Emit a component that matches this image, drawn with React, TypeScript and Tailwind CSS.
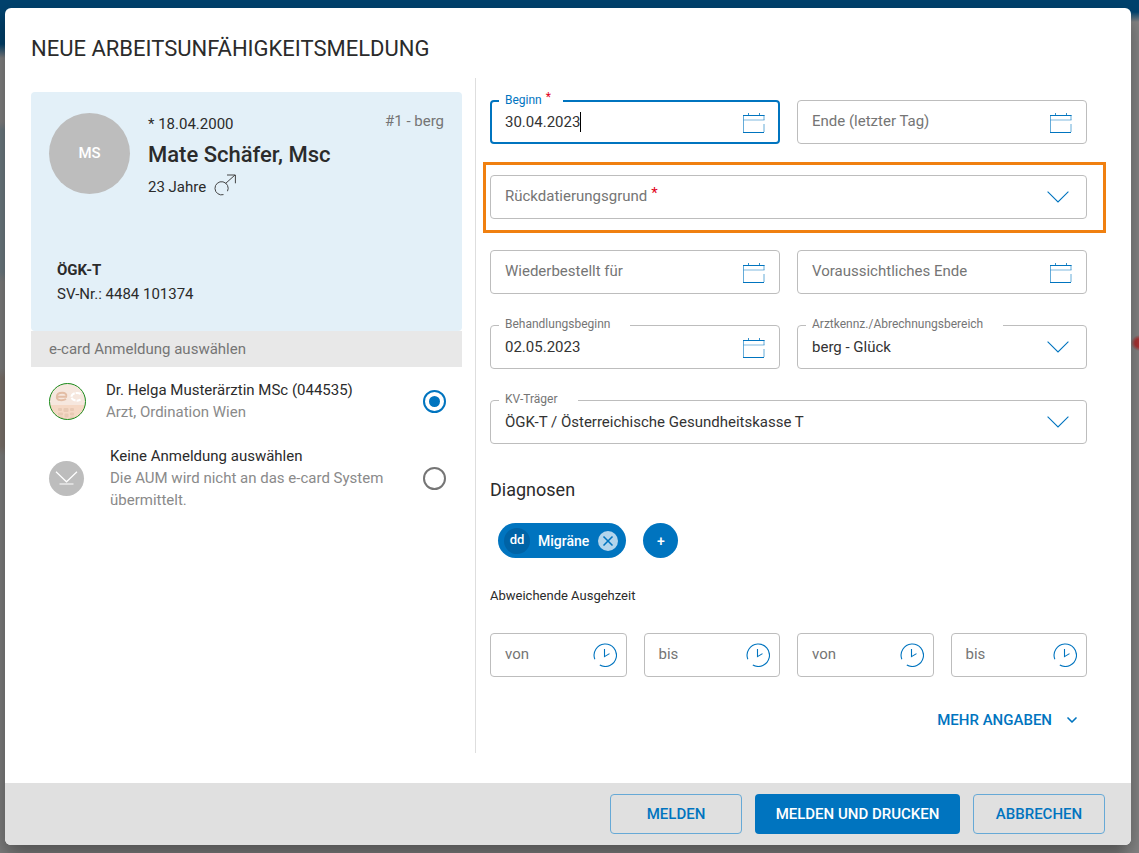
import React, { useState } from 'react';
import { ChevronDown, X } from 'lucide-react';
import clsx from 'clsx';

function CalendarIcon() {
  return (
    <svg width="22" height="21" viewBox="0 0 22 21" fill="none" stroke="#0074bf" aria-hidden="true">
      <path d="M5.5 1v3M16.5 1v3" strokeWidth="1" opacity="0.8" />
      <path d="M0 3.500h21.500" strokeWidth="1" />
      <path d="M.5 8h21" strokeWidth="1" opacity="0.5" />
      <path d="M.5 3v17M21 3v5M21 12v8" strokeWidth="1" opacity="0.6" />
      <path d="M0 20.500h21" strokeWidth="1" />
    </svg>
  );
}

function ClockIcon() {
  return (
    <svg width="24" height="24" viewBox="0 0 24 24" fill="none" stroke="#0074bf" strokeWidth="1.1" aria-hidden="true">
      <path d="M1.800 16.200A11.200 11.200 0 1 1 6.800 22" />
      <path d="M11.500 6v7.600l5-3" />
    </svg>
  );
}

function DropdownIcon() {
  return (
    <svg width="22" height="12" viewBox="0 0 22 12" fill="none" stroke="#0074bf" strokeWidth="1.1" aria-hidden="true">
      <path d="M.6.700 11 10.900 21.400.700" />
    </svg>
  );
}

function MaleIcon() {
  return (
    <svg className="mb-1" width="22" height="22" viewBox="0 0 22 22" fill="none" stroke="#444" aria-hidden="true">
      <path d="M9.500 20.600a6.600 6.600 0 1 1 4-3.400" />
      <path d="M11.500 9.500 21 1M13 1h8.400v8.300" />
    </svg>
  );
}

function EcardLogo() {
  return (
    <svg className="shrink-0" width="37" height="37" viewBox="0 0 37 37" aria-hidden="true">
      <defs>
        <clipPath id="ecard">
          <circle cx="18.5" cy="18.5" r="18" />
        </clipPath>
      </defs>
      <g clipPath="url(#ecard)">
        <rect width="37" height="22" fill="#f6e7de" />
        <rect y="22" width="37" height="15" fill="#f5d8c5" />
        <path
          d="M8.500 13.800H17.200C18 11.200 16 9.800 13.300 9.800C10 9.800 7.800 11.500 7.800 14.200C7.800 17.500 13.500 18.200 17 16"
          fill="none"
          stroke="#e3bda5"
          strokeWidth="1.900"
        />
        <path d="M31.500 11c-2-1.800-9-1.500-9 2.800s7 4.600 9 2.800" fill="none" stroke="#fff" strokeWidth="2" strokeDasharray="5 1" />
        <g fill="#e8c9b4">
          <rect x="9" y="25" width="4" height="3" rx="1" />
          <rect x="14.500" y="25" width="5" height="4" rx="1" />
          <rect x="21" y="25" width="4" height="3" rx="1" />
          <rect x="9" y="29.500" width="5" height="3" rx="1" />
          <rect x="15.500" y="30.500" width="4" height="4" rx="1" />
          <rect x="21" y="29.500" width="4" height="3" rx="1" />
          <rect x="10" y="33.500" width="4" height="2" rx="1" />
          <rect x="21" y="33.500" width="4" height="2" rx="1" />
        </g>
      </g>
      <circle cx="18.5" cy="18.5" r="18" fill="none" stroke="#1a8a1a" />
    </svg>
  );
}

function NoCardIcon() {
  return (
    <span className="flex size-[35px] shrink-0 items-center justify-center rounded-full bg-[#bdbdbd]">
      <svg width="23" height="14" viewBox="0 0 23 14" fill="none" stroke="#fff" strokeWidth="1.200" aria-hidden="true">
        <path d="M1 .8 11.500 10.800 22 .8M4.500 13h14" />
      </svg>
    </span>
  );
}

interface FieldProps {
  id: string;
  label: string;
  floating?: boolean;
  focused?: boolean;
  required?: boolean;
  icon: React.ReactNode;
  children: React.ReactNode;
}

function Field({ id, label, floating, focused, required, icon, children }: FieldProps) {
  return (
    <div
      className={clsx(
        'relative flex h-11 items-center rounded',
        focused ? 'border-2 border-[#0074bf] px-[13px]' : 'border border-[#bdbdbd] px-3.5'
      )}
    >
      {children}
      <label
        htmlFor={id}
        className={clsx(
          'pointer-events-none absolute whitespace-nowrap',
          floating ? 'bg-white pl-1.5 text-xs leading-4' : 'top-2.5 left-3.5 text-[15px] leading-5',
          floating && (focused ? '-top-[11px] left-[7px] pr-3' : '-top-2.5 left-2 pr-5'),
          focused ? 'text-[#0074bf]' : 'text-[#757575]'
        )}
      >
        {label}
        {required && <span className="ml-1 align-[3px] leading-none text-[#e2001a]">*</span>}
      </label>
      <span className="pointer-events-none absolute inset-y-0 right-0 flex items-center">{icon}</span>
    </div>
  );
}

const inputClass = 'h-full w-full bg-transparent text-[15px] text-[#333] outline-none';

function DateField({ id, label, value = '' }: { id: string; label: string; value?: string }) {
  return (
    <Field id={id} label={label} floating={value !== ''} icon={<span className="pr-3.5"><CalendarIcon /></span>}>
      <input id={id} type="text" defaultValue={value} className={inputClass} />
    </Field>
  );
}

function SelectField({ id, label, value = '', required }: { id: string; label: string; value?: string; required?: boolean }) {
  return (
    <Field
      id={id}
      label={label}
      required={required}
      floating={value !== ''}
      icon={<span className="pr-[17px]"><DropdownIcon /></span>}
    >
      <select id={id} defaultValue={value} className={clsx(inputClass, 'appearance-none')}>
        <option value={value}>{value}</option>
      </select>
    </Field>
  );
}

function TimeField({ id, label }: { id: string; label: string }) {
  return (
    <Field id={id} label={label} icon={<span className="pr-[9px]"><ClockIcon /></span>}>
      <input id={id} type="text" className={inputClass} />
    </Field>
  );
}

const radioClass =
  'size-[23px] shrink-0 appearance-none rounded-full border-2 border-[#757575] bg-clip-content p-1 checked:border-[#0074bf] checked:bg-[#0074bf]';

function PatientCard() {
  return (
    <section className="rounded bg-[#e3f0f8] px-[18px] pt-[21px] pb-[25px]">
      <div className="flex">
        <div className="flex size-[81px] shrink-0 items-center justify-center rounded-full bg-[#bdbdbd] text-[15px] font-medium text-white">
          MS
        </div>
        <div className="ml-[18px] flex-1">
          <p className="text-[15px] leading-[22px]">* 18.04.2000</p>
          <p className="mt-1 text-[22px] leading-8 font-medium">Mate Schäfer, Msc</p>
          <p className="mt-0.5 flex h-7 items-center gap-2 text-[15px]">
            23 Jahre
            <MaleIcon />
          </p>
        </div>
        <p className="text-[15px] leading-4 text-[#757575]">#1 - berg</p>
      </div>
      <div className="mt-[57px] ml-2 text-[15px] leading-6">
        <p className="font-bold">ÖGK-T</p>
        <p>SV-Nr.: 4484 101374</p>
      </div>
    </section>
  );
}

function Registrations() {
  const [selected, setSelected] = useState('ecard');

  return (
    <section className="text-[15px] leading-[22px]">
      <h2 className="bg-[#e8e8e8] px-[18px] py-[7px] text-[#757575]">e-card Anmeldung auswählen</h2>
      <label className="flex items-center px-[18px] pt-3">
        <EcardLogo />
        <span className="ml-5 flex-1">
          Dr. Helga Musterärztin MSc (044535)
          <span className="block text-[#8a8a8a]">Arzt, Ordination Wien</span>
        </span>
        <input
          type="radio"
          name="anmeldung"
          checked={selected === 'ecard'}
          onChange={() => setSelected('ecard')}
          className={clsx(radioClass, '-mr-0.5')}
        />
      </label>
      <label className="mt-[22px] flex items-center px-[18px]">
        <NoCardIcon />
        <span className="ml-[26px] flex-1">
          Keine Anmeldung auswählen
          <span className="block text-[#8a8a8a]">Die AUM wird nicht an das e-card System übermittelt.</span>
        </span>
        <input
          type="radio"
          name="anmeldung"
          checked={selected === 'none'}
          onChange={() => setSelected('none')}
          className={clsx(radioClass, '-mr-0.5')}
        />
      </label>
    </section>
  );
}

export default function App() {
  const [begin, setBegin] = useState('30.04.2023');

  return (
    <div className="flex min-h-screen bg-[#7d7d7d] bg-[radial-gradient(circle_at_100%_343px,#a33_4px,#0000_8px),linear-gradient(#00426d_12px,#0000_22px),linear-gradient(90deg,#0000_98%,#858585_99%),linear-gradient(#003f69_44px,#808080_58px,#808080_122px,#6d7a80_130px,#6d7a80_272px,#7d7d7d_282px,#7d7d7d_368px,#7b726c_378px,#7b726c_446px,#7d7d7d_456px)] pt-2 pr-2 pb-2 pl-[5px] font-[Roboto,sans-serif] text-[#2b2b2b]">
      <div
        role="dialog"
        aria-labelledby="title"
        className="flex flex-1 flex-col overflow-hidden rounded-md bg-white shadow-[0_10px_20px_rgba(0,0,0,0.35)]"
      >
        <h1 id="title" className="mt-[26px] mb-3.5 ml-[26px] text-[22px] leading-[30px]">
          NEUE ARBEITSUNFÄHIGKEITSMELDUNG
        </h1>

        <div className="mb-[30px] ml-[26px] grid grid-cols-[minmax(0,444fr)_minmax(0,656fr)]">
          <aside className="pt-3.5 pr-[13px]">
            <PatientCard />
            <Registrations />
          </aside>

          <main className="border-l border-[#dedede] pt-[22px] pr-11 pb-[21px] pl-3.5">
            <div className="flex flex-col gap-[31px]">
              <div className="grid grid-cols-2 gap-[17px]">
                <Field id="beginn" label="Beginn" floating focused required icon={<span className="pr-[13px]"><CalendarIcon /></span>}>
                  <input
                    id="beginn"
                    type="text"
                    value={begin}
                    onChange={(e) => setBegin(e.target.value)}
                    className="h-full bg-transparent text-[15px] text-[#333] caret-transparent outline-none [field-sizing:content]"
                  />
                  <span className="h-5 w-px bg-black" />
                </Field>
                <DateField id="ende" label="Ende (letzter Tag)" />
              </div>
              <div className="-mt-[13px] -mr-[19px] -mb-3.5 -ml-[7px] border-3 border-[#f08010] pt-2.5 pr-4 pb-[11px] pl-1">
                <SelectField id="grund" label="Rückdatierungsgrund" required />
              </div>
              <div className="grid grid-cols-2 gap-[17px]">
                <DateField id="wiederbestellt" label="Wiederbestellt für" />
                <DateField id="voraussichtlich" label="Voraussichtliches Ende" />
              </div>
              <div className="grid grid-cols-2 gap-[17px]">
                <DateField id="behandlung" label="Behandlungsbeginn" value="02.05.2023" />
                <SelectField id="arzt" label="Arztkennz./Abrechnungsbereich" value="berg - Glück" />
              </div>
              <SelectField id="kv" label="KV-Träger" value="ÖGK-T / Österreichische Gesundheitskasse T" />
            </div>

            <h2 className="mt-[34px] text-lg leading-6">Diagnosen</h2>
            <div className="mt-[21px] ml-2 flex gap-[17px] text-sm font-medium text-white">
              <div className="flex h-[35px] items-center rounded-full bg-[#0074bf] px-1.5">
                <span className="flex size-[26px] items-center justify-center rounded-full bg-[#0063a6] text-[13px]">dd</span>
                <span className="mx-2">Migräne</span>
                <button
                  type="button"
                  aria-label="Migräne entfernen"
                  className="mr-0.5 ml-px flex size-5 items-center justify-center rounded-full bg-[#b3d5ec] text-[#0074bf]"
                >
                  <X size={16} strokeWidth={2.5} />
                </button>
              </div>
              <button type="button" className="size-[35px] rounded-full bg-[#0074bf]">
                +
              </button>
            </div>

            <h3 className="mt-7 text-[13px] leading-5">Abweichende Ausgehzeit</h3>
            <div className="mt-[27px] grid grid-cols-4 gap-[17px]">
              <TimeField id="von1" label="von" />
              <TimeField id="bis1" label="bis" />
              <TimeField id="von2" label="von" />
              <TimeField id="bis2" label="bis" />
            </div>

            <button type="button" className="mt-[31px] mr-[7px] ml-auto flex items-center gap-3 text-[15px] leading-6 font-medium text-[#0074bf]">
              MEHR ANGABEN
              <ChevronDown size={16} strokeWidth={2.5} />
            </button>
          </main>
        </div>

        <footer className="mt-auto flex justify-end gap-[13px] bg-[#e0e0e0] px-[26px] py-[11px] text-[15px] font-medium">
          <button type="button" className="h-10 w-[132px] rounded border border-[#66a9d6] text-[#0074bf]">
            MELDEN
          </button>
          <button type="button" className="h-10 min-w-[205px] rounded bg-[#0074bf] px-4 text-white">
            MELDEN UND DRUCKEN
          </button>
          <button type="button" className="h-10 w-[132px] rounded border border-[#66a9d6] text-[#0074bf]">
            ABBRECHEN
          </button>
        </footer>
      </div>
    </div>
  );
}
